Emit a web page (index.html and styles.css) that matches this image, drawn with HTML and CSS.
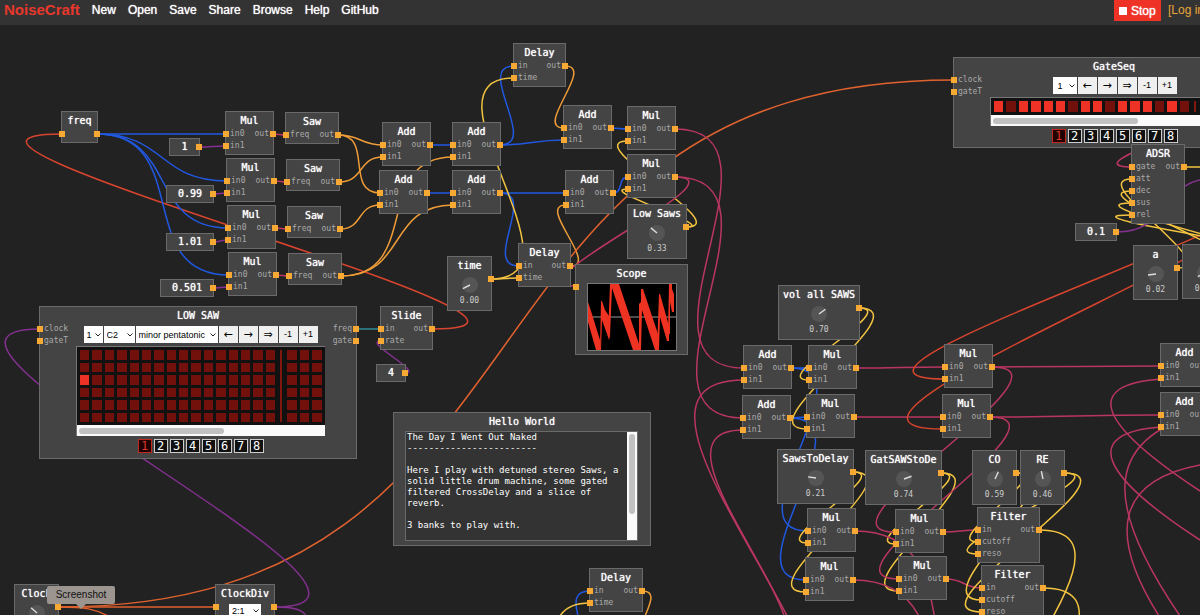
FILE: index.html
```html
<!DOCTYPE html>
<html lang="en">
<head>
<meta charset="utf-8">
<title>NoiseCraft</title>
<link rel="stylesheet" href="styles.css">
</head>
<body>
<header class="topbar">
  <a class="logo" href="#">NoiseCraft</a>
  <nav class="menu">
    <a href="#">New</a><a href="#">Open</a><a href="#">Save</a><a href="#">Share</a><a href="#">Browse</a><a href="#">Help</a><a href="#">GitHub</a>
  </nav>
  <button class="stop" type="button"><span class="stop-icon"></span>Stop</button>
  <a class="login" href="#">[Log in]</a>
</header>

<main class="patch" id="patch">
  <svg class="cables" id="cables" aria-hidden="true"></svg>

  <section class="node low-saw">
    <h2 class="title">LOW SAW</h2>
    <div class="seq-body">
      <div class="ports ins"><span class="port">clock</span><span class="port">gateT</span></div>
      <div class="seq">
        <div class="controls">
          <select class="pick num" aria-label="Bars"><option>1</option></select>
          <select class="pick root" aria-label="Root note"><option>C2</option></select>
          <select class="pick scale" aria-label="Scale"><option>minor pentatonic</option></select>
          <button class="key arrow" type="button">←</button><button class="key arrow" type="button">→</button><button class="key arrow" type="button">⇒</button><button class="key" type="button">-1</button><button class="key" type="button">+1</button>
        </div>
        <div class="grid-box">
          <div class="steps tall" data-rows="6" data-on="32"></div>
          <div class="hscroll"><span class="thumb"></span></div>
        </div>
        <div class="banks"></div>
      </div>
      <div class="ports outs"><span class="port">freq</span><span class="port">gate</span></div>
    </div>
  </section>

  <section class="node gate-seq">
    <h2 class="title">GateSeq</h2>
    <div class="seq-body">
      <div class="ports ins"><span class="port">clock</span><span class="port">gateT</span></div>
      <div class="seq">
        <div class="controls">
          <select class="pick wide" aria-label="Bars"><option>1</option></select>
          <button class="key arrow" type="button">←</button><button class="key arrow" type="button">→</button><button class="key arrow" type="button">⇒</button><button class="key" type="button">-1</button><button class="key" type="button">+1</button>
        </div>
        <div class="grid-box">
          <div class="steps" data-rows="1" data-on="0,2,3,4,5,7,8,10,11,12,14"></div>
          <div class="hscroll"><span class="thumb"></span></div>
        </div>
        <div class="banks"></div>
      </div>
      <div class="ports outs"><span class="port">gate</span></div>
    </div>
  </section>

  <section class="node scope">
    <h2 class="title">Scope</h2>
    <div class="scope-body">
      <div class="ports ins"><span class="port"></span></div>
      <svg class="screen" viewBox="0 0 88 66" preserveAspectRatio="none" role="img" aria-label="Waveform">
        <path d="M0 33H88" stroke="#999" stroke-width="1"/>
        <g fill="#ee3322">
          <path d="M0 18L3 27L12 56V66H8L0 38Z"/>
          <path d="M12 66L13 17H14L17 26L21 32L22 52L21 56L19 50L14 36L13 66Z"/>
          <path d="M20 52L22 0H31L51 60V66H45L24 4L22 52Z"/>
          <path d="M51 66V20L53 18V5H55L70 50V66H67L54 26L53 66Z"/>
          <path d="M69 66L71 10H72L81 42V57H79L72 33L71 66Z"/>
          <path d="M80 50L81 0H84V5L86 10V28H84L82 18V50Z"/>
        </g>
      </svg>
    </div>
  </section>

  <section class="node notes">
    <h2 class="title">Hello World</h2>
    <div class="note-box">
      <textarea class="note" aria-label="Notes" spellcheck="false">The Day I Went Out Naked
------------------------

Here I play with detuned stereo Saws, a
solid little drum machine, some gated
filtered CrossDelay and a slice of
reverb.

3 banks to play with.</textarea>
      <div class="vscroll"><span class="thumb"></span></div>
    </div>
  </section>

  <section class="node clock-div">
    <h2 class="title">ClockDiv</h2>
    <div class="div-body">
      <div class="ports ins"><span class="port"></span></div>
      <select class="pick ratio" aria-label="Ratio"><option>2:1</option></select>
      <div class="ports outs"><span class="port"></span></div>
    </div>
  </section>

  <div class="tooltip" role="tooltip">Screenshot</div>
</main>
<script src="patch.js"></script>
</body>
</html>
```
FILE: styles.css
```css
* { box-sizing: border-box; }

body {
  margin: 0;
  min-height: 100vh;
  display: flex;
  flex-direction: column;
  overflow: hidden;
  background: #222;
  color: #fff;
  font-family: "DejaVu Sans Mono", monospace;
}

a { color: inherit; text-decoration: none; }
button, select, textarea { font: inherit; margin: 0; }

.topbar {
  display: flex;
  align-items: flex-start;
  height: 25px;
  padding-left: 4px;
  background: #333;
  font-family: "Liberation Sans", Arial, sans-serif;
  font-size: 12px;
  line-height: 20px;
  white-space: nowrap;
}
.logo { color: #e8382c; font-size: 15px; font-weight: bold; margin-right: 12px; }
.menu { display: flex; gap: 12px; flex: 1; }
.stop {
  display: flex;
  align-items: center;
  gap: 4px;
  height: 21px;
  width: 47px;
  margin-right: 7px;
  padding: 0 5px;
  border: 0;
  background: #ee3326;
  color: #fff;
}
.stop-icon { width: 8px; height: 8px; background: #fff; }
.login { color: #e9a63a; width: 32px; }
.menu, .stop { text-shadow: 0 0 1px #fff; }

.patch { position: relative; flex: 1; min-height: 590px; overflow: hidden; }
.cables { position: absolute; inset: 0; width: 100%; height: 100%; fill: none; stroke-width: 1.5; }

.node {
  position: absolute;
  padding-bottom: 2px;
  border: 1px solid #6a6a6a;
  background: #444;
}
.title {
  margin: 0;
  height: 16px;
  font-size: 10px;
  font-weight: normal;
  line-height: 17px;
  text-align: center;
  text-shadow: 0 0 1px #fff;
  white-space: nowrap;
}
.body { display: flex; justify-content: space-between; }
.ports { display: flex; flex-direction: column; }
.port {
  position: relative;
  height: 12px;
  padding: 0 4px;
  color: #aaa;
  font-size: 8px;
  line-height: 12px;
}
.port::before {
  content: "";
  position: absolute;
  top: 3px;
  left: -3px;
  width: 6px;
  height: 6px;
  background: #f7a934;
}
.outs { align-items: flex-end; text-align: right; }
.outs .port::before { left: auto; right: -3px; }

.dial { display: flex; flex: 1; flex-direction: column; align-items: center; gap: 2px; padding-top: 4px; }
.dial svg { width: 16px; height: 16px; overflow: visible; }
.value { color: #ccc; font-size: 8px; line-height: 12px; }
.knob .body { height: 35px; }
.knob .ports { width: 0; }

.const { display: flex; align-items: center; height: 18px; padding: 0; }
.const .value { flex: 1; color: #fff; font-size: 10px; text-align: center; text-shadow: 0 0 1px #fff; }
.const .ports { width: 0; }

.low-saw { left: 39px; top: 281px; width: 318px; height: 153px; }
.gate-seq { left: 953px; top: 32px; width: 322px; height: 91px; }
.scope { left: 575px; top: 239px; width: 113px; height: 91px; }
.notes { left: 393px; top: 387px; width: 258px; height: 134px; }
.clock-div { left: 215px; top: 559px; width: 60px; height: 54px; }

.seq-body { display: grid; grid-template-columns: 36px 249px 1fr; }
.seq { display: flex; flex-direction: column; align-items: center; gap: 3px; padding-top: 3px; }
.controls { display: flex; gap: 1px; height: 17px; font-family: "Liberation Sans", Arial, sans-serif; font-size: 9px; }
.pick {
  appearance: none;
  height: 17px;
  padding: 0 3px;
  border: 0;
  border-radius: 0;
  background: #fff url("data:image/svg+xml,%3Csvg xmlns='http://www.w3.org/2000/svg' width='6' height='4'%3E%3Cpath d='M.5 .5L3 3L5.5 .5' fill='none' stroke='%23222'/%3E%3C/svg%3E") no-repeat right 2px center;
  color: #000;
}
.num { width: 19px; }
.root { width: 31px; }
.scale { width: 82px; }
.wide { width: 24px; padding-left: 5px; }
.key { width: 19px; height: 17px; padding: 0; border: 0; background: #efefef; color: #000; line-height: 17px; text-align: center; }
.arrow { font-family: "DejaVu Sans", sans-serif; font-size: 11px; }

.grid-box { width: 100%; border: 1px solid #777; border-right: 0; border-bottom: 0; }
.steps { display: flex; gap: 3px; height: 17px; padding: 3px; background: #111; }
.tall { height: 78px; }
.beat { display: grid; flex: 4 1 0; grid-template-columns: repeat(4, 1fr); gap: 3px; }
.beat.short { flex-grow: 3; grid-template-columns: repeat(3, 1fr); }
.bar-line { width: 2px; margin: 0 2px; background: #801810; }
.step { padding: 0; border: 0; background: #72110b; min-height: 0; min-width: 0; }
.step.on { background: #ee3326; }
.hscroll { height: 11px; padding: 3px 2px; background: #fafafa; }
.thumb { display: block; border-radius: 3px; background: #c1c1c1; }
.hscroll .thumb { width: 145px; height: 6px; }
.banks { display: flex; gap: 2px; }
.bank { width: 14px; height: 14px; padding: 0; border: 1px solid #ccc; background: #111; color: #fff; font-size: 12px; line-height: 12px; }
.bank.on { border-color: #c0281e; color: #d8382c; background: #200; }

.scope-body { display: flex; }
.scope .ports { width: 11px; }
.screen { width: 90px; height: 68px; margin-top: 2px; border: 1px solid #777; background: #000; }

.note-box { display: flex; height: 110px; margin: 2px 12px 0 11px; border: 1px solid #6a6a6a; }
.note {
  flex: 1;
  min-width: 0;
  padding: 0 1px;
  border: 0;
  background: #333;
  color: #fff;
  font-size: 9px;
  line-height: 11px;
  resize: none;
  overflow: hidden;
  white-space: pre;
}
.vscroll { width: 10px; padding: 2px; background: #fafafa; }
.vscroll .thumb { height: 80px; }

.div-body { display: flex; justify-content: space-between; }
.clock-div .ports { width: 0; }
.ratio { width: 32px; height: 14px; margin-top: 3px; font-family: "Liberation Sans", Arial, sans-serif; font-size: 9px; }

.tooltip {
  position: absolute;
  left: 47px;
  top: 561px;
  width: 68px;
  border-radius: 2px;
  background: #9b948f;
  color: #111;
  font-family: "Liberation Sans", Arial, sans-serif;
  font-size: 10px;
  line-height: 18px;
  text-align: center;
}
.tooltip::after {
  content: "";
  position: absolute;
  left: 29px;
  top: 18px;
  border: 5px solid transparent;
  border-top-color: #9b948f;
  border-bottom: 0;
}
```
FILE: patch.js
```js
const TOP = 25;
const patch = document.getElementById('patch');
const cables = document.getElementById('cables');

const IN2 = ['in0', 'in1'];
const nodes = {};

function el(tag, cls, text) {
  const e = document.createElement(tag);
  if (cls) e.className = cls;
  if (text !== undefined) e.textContent = text;
  return e;
}

function ports(side, names) {
  const col = el('div', 'ports ' + side);
  names.forEach(n => col.append(el('span', 'port', n)));
  return col;
}

function place(id, cls, x, y, w) {
  nodes[id] = { x, y, w, mid: cls.includes('const') };
  const n = el('section', 'node ' + cls);
  n.style.left = x + 'px';
  n.style.top = y - TOP + 'px';
  n.style.width = w + 'px';
  patch.append(n);
  return n;
}

function op(id, title, x, y, w, ins, outs = ['out']) {
  const n = place(id, 'op', x, y, w);
  const body = el('div', 'body');
  body.append(ports('ins', ins), ports('outs', outs));
  n.append(el('h2', 'title', title), body);
}

function knob(id, title, x, y, w, value, angle) {
  const n = place(id, 'knob', x, y, w);
  const body = el('div', 'body');
  const dial = el('div', 'dial');
  dial.innerHTML = `<svg viewBox="-8 -8 16 16"><circle r="8" fill="#555"/><path d="M0 0V-8" stroke="#ddd" stroke-width="1.4" transform="rotate(${angle})"/></svg>`;
  dial.append(el('span', 'value', value));
  body.append(dial, ports('outs', ['']));
  n.append(el('h2', 'title', title), body);
}

function num(id, value, x, y, w) {
  const n = place(id, 'const', x, y, w);
  n.append(el('span', 'value', value), ports('outs', ['']));
}

op('freq', 'freq', 61, 111, 37, [''], ['']);
[[225, 111], [226, 158], [227, 205], [228, 252]].forEach(([x, y], i) => {
  op('mul' + (i + 1), 'Mul', x, y, 49, IN2);
  op('saw' + (i + 1), 'Saw', x + 60, y + 1, 54, ['freq']);
});
num('k1', '1', 169, 138, 31);
num('k2', '0.99', 166, 185, 48);
num('k3', '1.01', 166, 233, 48);
num('k4', '0.501', 160, 279, 54);
num('k5', '4', 376, 364, 30);
num('k6', '0.1', 1075, 223, 42);

[['add1', 382, 122], ['add2', 379, 170], ['add3', 452, 122], ['add4', 452, 170],
 ['add5', 563, 105], ['add6', 565, 170], ['add7', 743, 345], ['add8', 742, 395],
 ['add9', 1160, 343], ['add10', 1160, 392]].forEach(([id, x, y]) => op(id, 'Add', x, y, 49, IN2));

[['mul5', 627, 106], ['mul6', 627, 154], ['mul13', 944, 344], ['mul14', 942, 394]]
  .forEach(([id, x, y]) => op(id, 'Mul', x, y, 49, IN2));

op('delay1', 'Delay', 513, 43, 53, ['in', 'time']);
op('delay2', 'Delay', 518, 243, 53, ['in', 'time']);
op('delay3', 'Delay', 589, 568, 54, ['in', 'time']);
op('slide', 'Slide', 380, 306, 53, ['in', 'rate']);
op('adsr', 'ADSR', 1131, 144, 54, ['gate', 'att', 'dec', 'sus', 'rel']);

knob('time', 'time', 447, 256, 45, '0.00', -116);
knob('low', 'Low Saws', 627, 204, 60, '0.33', -50);
knob('vol', 'vol all SAWS', 778, 285, 82, '0.70', 53);
knob('saws', 'SawsToDelay', 777, 449, 77, '0.21', -82);
knob('gat', 'GatSAWStoDe', 865, 450, 77, '0.74', 70);
knob('co', 'CO', 972, 450, 45, '0.59', 25);
knob('re', 'RE', 1020, 450, 45, '0.46', -12);
knob('a', 'a', 1133, 245, 45, '0.02', -97);
knob('d', 'd', 1182, 244, 45, '0.10', -116);
knob('clock', 'Clock', 14, 584, 45, '120', -48);

[['mul7', 808, 345], ['mul8', 806, 394], ['mul9', 807, 508], ['mul10', 805, 557],
 ['mul11', 895, 509], ['mul12', 898, 556]].forEach(([id, x, y]) => op(id, 'Mul', x, y, 49, IN2));

op('filter1', 'Filter', 977, 507, 63, ['in', 'cutoff', 'reso']);
op('filter2', 'Filter', 981, 565, 63, ['in', 'cutoff', 'reso']);

patch.append(document.querySelector('.tooltip'));

function outPort(ref) {
  if (Array.isArray(ref)) return ref;
  const n = nodes[ref];
  return [n.x + n.w - 1, n.y + (n.mid ? 9 : 23)];
}

function inPort(ref) {
  if (Array.isArray(ref)) return ref;
  const [id, i] = ref.split('.');
  const n = nodes[id];
  return [n.x + 1, n.y + 23 + 12 * i];
}

function draw(d, color) {
  const p = document.createElementNS('http://www.w3.org/2000/svg', 'path');
  p.setAttribute('d', d);
  p.setAttribute('stroke', color);
  p.setAttribute('transform', `translate(0 ${-TOP})`);
  cables.append(p);
}

/* Both handles are horizontal and half as long as the distance spanned. */
function cable(from, to, color) {
  const [x0, y0] = outPort(from);
  const [x1, y1] = inPort(to);
  const c = Math.hypot(x1 - x0, y1 - y0) / 2;
  draw(`M${x0} ${y0}C${x0 + c} ${y0} ${x1 - c} ${y1} ${x1} ${y1}`, color);
}

const BLUE = '#2158e0', RED = '#d8452e', ORANGE = '#e0622f', AMBER = '#ee9c38',
      YELLOW = '#f3c440', PINK = '#b93660', PURPLE = '#843090', TEAL = '#2f8d94';

const links = [
  [RED, 'slide', 'freq.0'],
  [BLUE, 'freq', 'mul1.0'], [BLUE, 'freq', 'mul2.0'], [BLUE, 'freq', 'mul3.0'], [BLUE, 'freq', 'mul4.0'],
  [PURPLE, 'k1', 'mul1.1'], [PURPLE, 'k2', 'mul2.1'], [PURPLE, 'k3', 'mul3.1'], [PURPLE, 'k4', 'mul4.1'],
  [PINK, 'mul1', 'saw1.0'], [PINK, 'mul2', 'saw2.0'], [PINK, 'mul3', 'saw3.0'], [PINK, 'mul4', 'saw4.0'],
  [AMBER, 'saw1', 'add1.0'], [AMBER, 'saw1', 'add2.0'], [AMBER, 'saw2', 'add1.1'], [AMBER, 'saw3', 'add2.1'],
  [AMBER, 'saw4', 'add3.1'], [AMBER, 'saw4', 'add4.1'],
  [BLUE, 'add1', 'add3.0'], [BLUE, 'add2', 'add4.0'], [BLUE, 'add3', 'delay1.0'], [BLUE, 'add3', 'add5.1'],
  [BLUE, 'add4', 'add6.0'], [BLUE, 'add4', 'delay2.0'],
  [YELLOW, 'time', 'delay1.1'], [YELLOW, 'time', 'delay2.1'],
  [AMBER, 'delay1', 'add5.0'], [AMBER, 'delay2', 'add6.1'],
  [BLUE, 'add5', 'mul5.0'], [BLUE, 'add6', 'mul6.0'],
  [ORANGE, 'clock', [216, 607]], [ORANGE, 'clock', [954, 80]],
  [YELLOW, 'low', 'mul5.1'], [YELLOW, 'low', 'mul6.1'],
  [PINK, 'mul6', [576, 286]], [PINK, 'mul5', 'add7.0'], [PINK, 'mul6', 'add8.0'],
  [PINK, [768, 739], 'add7.1'], [PINK, [757, 665], 'add8.1'],
  [BLUE, 'add7', 'mul7.0'], [BLUE, 'add8', 'mul8.0'], [BLUE, 'add7', 'mul9.0'], [BLUE, 'add8', 'mul10.0'],
  [YELLOW, 'vol', 'mul7.1'], [YELLOW, 'vol', 'mul8.1'],
  [YELLOW, 'saws', 'mul9.1'], [YELLOW, 'saws', 'mul10.1'],
  [YELLOW, 'gat', 'mul11.1'], [YELLOW, 'gat', 'mul12.1'],
  [PINK, 'mul7', 'mul13.0'], [PINK, 'mul8', 'mul14.0'],
  [RED, [1250, 178], 'mul13.1'], [RED, [1250, 178], 'mul14.1'],
  [PINK, 'mul13', 'add9.0'], [PINK, 'mul13', 'mul11.0'], [PINK, 'mul14', 'add10.0'], [PINK, 'mul14', 'mul12.0'],
  [PINK, 'mul9', [1020, 740]], [PINK, 'mul10', [1020, 800]],
  [PINK, 'mul11', 'filter1.0'], [PINK, 'mul12', 'filter2.0'],
  [YELLOW, 'co', 'filter1.1'], [YELLOW, 'co', 'filter2.1'], [YELLOW, 're', 'filter1.2'], [YELLOW, 're', 'filter2.2'],
  [YELLOW, 'filter1', [1010, 800]], [YELLOW, 'filter2', [1013, 860]],
  [TEAL, [356, 329], 'slide.0'], [PURPLE, 'k5', 'slide.1'], [PURPLE, [274, 607], [40, 329]],
  [YELLOW, 'a', 'adsr.1'], [YELLOW, 'd', 'adsr.2'], [YELLOW, [1275, 266], 'adsr.3'], [YELLOW, [1322, 266], 'adsr.4'],
  [YELLOW, 'adsr', [1260, 167]], [PURPLE, 'k6', [1216, 178]]
];
links.forEach(([color, from, to]) => cable(from, to, color));

/* Cables that run off the edge of the view */
draw('M1161 379C1080 385 1100 425 1200 491', PINK);
draw('M1161 427C1080 433 1100 475 1200 540', PINK);
draw('M1180 420C1105 450 1108 510 1180 616', PINK);
draw('M1200 465C1120 480 1105 530 1159 616', PINK);
draw('M1132 167C1112 167 1112 162 1134 152', PINK);
draw('M274 607C295 607 303 610 306 616', PURPLE);
draw('M59 607C85 607 95 609 108 616', ORANGE);
draw('M590 591C575 591 574 600 578 616', BLUE);
draw('M590 603C575 603 565 608 560 616', YELLOW);
draw('M642 591C655 591 652 600 645 616', AMBER);

document.querySelectorAll('.steps').forEach(box => {
  const rows = Number(box.dataset.rows);
  const on = box.dataset.on.split(',').map(Number);
  for (let beat = 0; beat < 5; beat++) {
    const cols = beat === 4 ? 3 : 4;
    if (beat === 4) box.append(el('span', 'bar-line'));
    const group = el('div', cols === 3 ? 'beat short' : 'beat');
    for (let r = 0; r < rows; r++) {
      for (let c = 0; c < cols; c++) {
        const step = el('button', 'step');
        step.type = 'button';
        const index = r * 16 + beat * 4 + c;
        step.setAttribute('aria-label', `Step ${beat * 4 + c + 1}, row ${r + 1}`);
        if (beat < 4 && on.includes(index)) step.classList.add('on');
        group.append(step);
      }
    }
    box.append(group);
  }
});

document.querySelectorAll('.banks').forEach(box => {
  for (let i = 1; i <= 8; i++) {
    const b = el('button', i === 1 ? 'bank on' : 'bank', i);
    b.type = 'button';
    box.append(b);
  }
});
```
